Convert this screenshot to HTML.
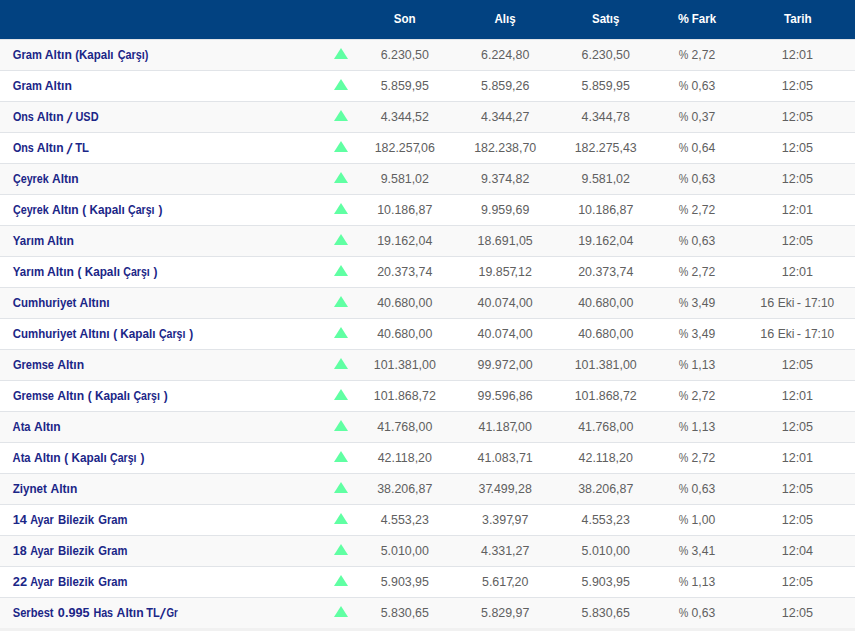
<!DOCTYPE html>
<html lang="tr">
<head>
<meta charset="utf-8">
<title>Altın Fiyatları</title>
<style>
html,body{margin:0;padding:0;}
body{width:855px;height:631px;overflow:hidden;background:#f1f1f1;font-family:"Liberation Sans",sans-serif;font-size:13px;color:#606060;}
.tbl{width:855px;}
.hd{height:39px;background:#024281;color:#fff;position:relative;line-height:37px;}
.r{height:30px;border-top:1px solid #e1e4e8;position:relative;background:#fff;line-height:30px;}
.r.o{background:#f9f9f9;}
span{position:absolute;left:0;top:0;white-space:nowrap;display:block;transform-origin:0 50%;}
.r a{font-weight:bold;color:#1b2687;}
.hd b{font-weight:bold;}
em{font-style:normal;}
.r i{position:absolute;left:334px;top:8px;width:0;height:0;border-left:7px solid transparent;border-right:7px solid transparent;border-bottom:11px solid #60ffa3;}
u{text-decoration:none;letter-spacing:-2px;}
</style>
</head>
<body>
<div class="tbl">
<div class="hd"><b><span style="transform:translateX(393.76px) scaleX(0.894)">Son</span></b> <b><span style="transform:translateX(494.47px) scaleX(0.887)">Alış</span></b> <b><span style="transform:translateX(591.97px) scaleX(0.883)">Satış</span></b> <b><span style="transform:translateX(678.05px) scaleX(0.938)">%</span> <span style="transform:translateX(691.83px) scaleX(0.883)">Fark</span></b> <b><span style="transform:translateX(783.99px) scaleX(0.897)">Tarih</span></b></div>
<div class="r o"><a><span style="transform:translateX(12.87px) scaleX(0.855)">Gram</span> <span style="transform:translateX(44.85px) scaleX(0.933)">Altın</span> <span style="transform:translateX(75.15px) scaleX(0.886)">(Kapalı</span> <span style="transform:translateX(117.68px) scaleX(0.834)">Çarşı)</span></a> <i></i> <em><span style="transform:translateX(380.64px) scaleX(0.954)">6.230,50</span></em> <em><span style="transform:translateX(481.04px) scaleX(0.954)">6.224,80</span></em> <em><span style="transform:translateX(581.59px) scaleX(0.954)">6.230,50</span></em> <em><span style="transform:translateX(678.69px) scaleX(0.828)">%</span> <span style="transform:translateX(691.57px) scaleX(0.935)">2,72</span></em> <em><span style="transform:translateX(781.63px) scaleX(0.968)">12:01</span></em></div>
<div class="r"><a><span style="transform:translateX(12.87px) scaleX(0.855)">Gram</span> <span style="transform:translateX(44.85px) scaleX(0.933)">Altın</span></a> <i></i> <em><span style="transform:translateX(380.64px) scaleX(0.954)">5.859,95</span></em> <em><span style="transform:translateX(481.04px) scaleX(0.954)">5.859,26</span></em> <em><span style="transform:translateX(581.59px) scaleX(0.954)">5.859,95</span></em> <em><span style="transform:translateX(678.69px) scaleX(0.828)">%</span> <span style="transform:translateX(691.57px) scaleX(0.935)">0,63</span></em> <em><span style="transform:translateX(781.63px) scaleX(0.968)">12:05</span></em></div>
<div class="r o"><a><span style="transform:translateX(12.89px) scaleX(0.827)">Ons</span> <span style="transform:translateX(36.75px) scaleX(0.926)">Altın</span> <span style="transform:translate(67.40px,1.1px) scale(1.05,1.167) skewX(-15.5deg)">/</span> <span style="transform:translateX(75.47px) scaleX(0.842)">USD</span></a> <i></i> <em><span style="transform:translateX(380.64px) scaleX(0.954)">4.344,52</span></em> <em><span style="transform:translateX(481.04px) scaleX(0.954)">4.344,27</span></em> <em><span style="transform:translateX(581.59px) scaleX(0.954)">4.344,78</span></em> <em><span style="transform:translateX(678.69px) scaleX(0.828)">%</span> <span style="transform:translateX(691.57px) scaleX(0.935)">0,37</span></em> <em><span style="transform:translateX(781.63px) scaleX(0.968)">12:05</span></em></div>
<div class="r"><a><span style="transform:translateX(12.89px) scaleX(0.827)">Ons</span> <span style="transform:translateX(36.75px) scaleX(0.926)">Altın</span> <span style="transform:translate(67.40px,1.1px) scale(1.05,1.167) skewX(-15.5deg)">/</span> <span style="transform:translateX(75.19px) scaleX(0.872)">TL</span></a> <i></i> <em><span style="transform:translateX(374.69px) scaleX(0.954)">182.25<u>7</u>,06</span></em> <em><span style="transform:translateX(474.14px) scaleX(0.954)">182.238,70</span></em> <em><span style="transform:translateX(574.69px) scaleX(0.954)">182.275,43</span></em> <em><span style="transform:translateX(678.69px) scaleX(0.828)">%</span> <span style="transform:translateX(691.57px) scaleX(0.935)">0,64</span></em> <em><span style="transform:translateX(781.63px) scaleX(0.968)">12:05</span></em></div>
<div class="r o"><a><span style="transform:translateX(12.89px) scaleX(0.827)">Çeyrek</span> <span style="transform:translateX(52.00px) scaleX(0.924)">Altın</span></a> <i></i> <em><span style="transform:translateX(380.64px) scaleX(0.954)">9.581,02</span></em> <em><span style="transform:translateX(481.04px) scaleX(0.954)">9.374,82</span></em> <em><span style="transform:translateX(581.59px) scaleX(0.954)">9.581,02</span></em> <em><span style="transform:translateX(678.69px) scaleX(0.828)">%</span> <span style="transform:translateX(691.57px) scaleX(0.935)">0,63</span></em> <em><span style="transform:translateX(781.63px) scaleX(0.968)">12:05</span></em></div>
<div class="r"><a><span style="transform:translateX(12.89px) scaleX(0.827)">Çeyrek</span> <span style="transform:translateX(52.00px) scaleX(0.924)">Altın</span> <span style="transform:translateX(82.33px) scaleX(0.910)">(</span> <span style="transform:translateX(89.51px) scaleX(0.902)">Kapalı</span> <span style="transform:translateX(128.09px) scaleX(0.813)">Çarşı</span> <span style="transform:translateX(158.39px) scaleX(0.914)">)</span></a> <i></i> <em><span style="transform:translateX(377.19px) scaleX(0.954)">10.186,87</span></em> <em><span style="transform:translateX(481.04px) scaleX(0.954)">9.959,69</span></em> <em><span style="transform:translateX(578.14px) scaleX(0.954)">10.186,87</span></em> <em><span style="transform:translateX(678.69px) scaleX(0.828)">%</span> <span style="transform:translateX(691.57px) scaleX(0.935)">2,72</span></em> <em><span style="transform:translateX(781.63px) scaleX(0.968)">12:01</span></em></div>
<div class="r o"><a><span style="transform:translateX(12.83px) scaleX(0.883)">Yarım</span> <span style="transform:translateX(47.00px) scaleX(0.932)">Altın</span></a> <i></i> <em><span style="transform:translateX(377.19px) scaleX(0.954)">19.162,04</span></em> <em><span style="transform:translateX(477.59px) scaleX(0.954)">18.691,05</span></em> <em><span style="transform:translateX(578.14px) scaleX(0.954)">19.162,04</span></em> <em><span style="transform:translateX(678.69px) scaleX(0.828)">%</span> <span style="transform:translateX(691.57px) scaleX(0.935)">0,63</span></em> <em><span style="transform:translateX(781.63px) scaleX(0.968)">12:05</span></em></div>
<div class="r"><a><span style="transform:translateX(12.83px) scaleX(0.883)">Yarım</span> <span style="transform:translateX(47.00px) scaleX(0.932)">Altın</span> <span style="transform:translateX(77.53px) scaleX(0.910)">(</span> <span style="transform:translateX(84.71px) scaleX(0.902)">Kapalı</span> <span style="transform:translateX(123.29px) scaleX(0.813)">Çarşı</span> <span style="transform:translateX(153.59px) scaleX(0.914)">)</span></a> <i></i> <em><span style="transform:translateX(377.19px) scaleX(0.954)">20.373,74</span></em> <em><span style="transform:translateX(478.55px) scaleX(0.954)">19.85<u>7</u>,12</span></em> <em><span style="transform:translateX(578.14px) scaleX(0.954)">20.373,74</span></em> <em><span style="transform:translateX(678.69px) scaleX(0.828)">%</span> <span style="transform:translateX(691.57px) scaleX(0.935)">2,72</span></em> <em><span style="transform:translateX(781.63px) scaleX(0.968)">12:01</span></em></div>
<div class="r o"><a><span style="transform:translateX(12.86px) scaleX(0.880)">Cumhuriyet</span> <span style="transform:translateX(79.55px) scaleX(0.925)">Altını</span></a> <i></i> <em><span style="transform:translateX(377.19px) scaleX(0.954)">40.680,00</span></em> <em><span style="transform:translateX(477.59px) scaleX(0.954)">40.074,00</span></em> <em><span style="transform:translateX(578.14px) scaleX(0.954)">40.680,00</span></em> <em><span style="transform:translateX(678.69px) scaleX(0.828)">%</span> <span style="transform:translateX(691.57px) scaleX(0.935)">3,49</span></em> <em><span style="transform:translateX(760.13px) scaleX(0.971)">16</span> <span style="transform:translateX(777.65px) scaleX(0.931)">Eki</span> <span style="transform:translateX(796.78px) scaleX(0.992)">-</span> <span style="transform:translateX(804.39px) scaleX(0.913)">17:10</span></em></div>
<div class="r"><a><span style="transform:translateX(12.86px) scaleX(0.880)">Cumhuriyet</span> <span style="transform:translateX(79.55px) scaleX(0.925)">Altını</span> <span style="transform:translateX(113.13px) scaleX(0.910)">(</span> <span style="transform:translateX(120.31px) scaleX(0.902)">Kapalı</span> <span style="transform:translateX(158.89px) scaleX(0.813)">Çarşı</span> <span style="transform:translateX(189.19px) scaleX(0.914)">)</span></a> <i></i> <em><span style="transform:translateX(377.19px) scaleX(0.954)">40.680,00</span></em> <em><span style="transform:translateX(477.59px) scaleX(0.954)">40.074,00</span></em> <em><span style="transform:translateX(578.14px) scaleX(0.954)">40.680,00</span></em> <em><span style="transform:translateX(678.69px) scaleX(0.828)">%</span> <span style="transform:translateX(691.57px) scaleX(0.935)">3,49</span></em> <em><span style="transform:translateX(760.13px) scaleX(0.971)">16</span> <span style="transform:translateX(777.65px) scaleX(0.931)">Eki</span> <span style="transform:translateX(796.78px) scaleX(0.992)">-</span> <span style="transform:translateX(804.39px) scaleX(0.913)">17:10</span></em></div>
<div class="r o"><a><span style="transform:translateX(12.88px) scaleX(0.848)">Gremse</span> <span style="transform:translateX(57.15px) scaleX(0.933)">Altın</span></a> <i></i> <em><span style="transform:translateX(373.74px) scaleX(0.954)">101.381,00</span></em> <em><span style="transform:translateX(477.59px) scaleX(0.954)">99.972,00</span></em> <em><span style="transform:translateX(574.69px) scaleX(0.954)">101.381,00</span></em> <em><span style="transform:translateX(678.69px) scaleX(0.828)">%</span> <span style="transform:translateX(691.57px) scaleX(0.935)">1,13</span></em> <em><span style="transform:translateX(781.63px) scaleX(0.968)">12:05</span></em></div>
<div class="r"><a><span style="transform:translateX(12.88px) scaleX(0.848)">Gremse</span> <span style="transform:translateX(57.15px) scaleX(0.933)">Altın</span> <span style="transform:translateX(87.73px) scaleX(0.910)">(</span> <span style="transform:translateX(94.91px) scaleX(0.902)">Kapalı</span> <span style="transform:translateX(133.49px) scaleX(0.813)">Çarşı</span> <span style="transform:translateX(163.79px) scaleX(0.914)">)</span></a> <i></i> <em><span style="transform:translateX(373.74px) scaleX(0.954)">101.868,72</span></em> <em><span style="transform:translateX(477.59px) scaleX(0.954)">99.596,86</span></em> <em><span style="transform:translateX(574.69px) scaleX(0.954)">101.868,72</span></em> <em><span style="transform:translateX(678.69px) scaleX(0.828)">%</span> <span style="transform:translateX(691.57px) scaleX(0.935)">2,72</span></em> <em><span style="transform:translateX(781.63px) scaleX(0.968)">12:01</span></em></div>
<div class="r o"><a><span style="transform:translateX(12.58px) scaleX(0.858)">Ata</span> <span style="transform:translateX(33.95px) scaleX(0.926)">Altın</span></a> <i></i> <em><span style="transform:translateX(377.19px) scaleX(0.954)">41.768,00</span></em> <em><span style="transform:translateX(478.55px) scaleX(0.954)">41.18<u>7</u>,00</span></em> <em><span style="transform:translateX(578.14px) scaleX(0.954)">41.768,00</span></em> <em><span style="transform:translateX(678.69px) scaleX(0.828)">%</span> <span style="transform:translateX(691.57px) scaleX(0.935)">1,13</span></em> <em><span style="transform:translateX(781.63px) scaleX(0.968)">12:05</span></em></div>
<div class="r"><a><span style="transform:translateX(12.58px) scaleX(0.858)">Ata</span> <span style="transform:translateX(33.95px) scaleX(0.926)">Altın</span> <span style="transform:translateX(64.33px) scaleX(0.910)">(</span> <span style="transform:translateX(71.51px) scaleX(0.902)">Kapalı</span> <span style="transform:translateX(110.09px) scaleX(0.813)">Çarşı</span> <span style="transform:translateX(140.39px) scaleX(0.914)">)</span></a> <i></i> <em><span style="transform:translateX(377.65px) scaleX(0.954)">42.118,20</span></em> <em><span style="transform:translateX(477.59px) scaleX(0.954)">41.083,71</span></em> <em><span style="transform:translateX(578.60px) scaleX(0.954)">42.118,20</span></em> <em><span style="transform:translateX(678.69px) scaleX(0.828)">%</span> <span style="transform:translateX(691.57px) scaleX(0.935)">2,72</span></em> <em><span style="transform:translateX(781.63px) scaleX(0.968)">12:01</span></em></div>
<div class="r o"><a><span style="transform:translateX(12.72px) scaleX(0.893)">Ziynet</span> <span style="transform:translateX(50.50px) scaleX(0.926)">Altın</span></a> <i></i> <em><span style="transform:translateX(377.19px) scaleX(0.954)">38.206,87</span></em> <em><span style="transform:translateX(478.55px) scaleX(0.954)">3<u>7</u>.499,28</span></em> <em><span style="transform:translateX(578.14px) scaleX(0.954)">38.206,87</span></em> <em><span style="transform:translateX(678.69px) scaleX(0.828)">%</span> <span style="transform:translateX(691.57px) scaleX(0.935)">0,63</span></em> <em><span style="transform:translateX(781.63px) scaleX(0.968)">12:05</span></em></div>
<div class="r"><a><span style="transform:translateX(12.70px) scaleX(0.974)">14</span> <span style="transform:translateX(30.14px) scaleX(0.830)">Ayar</span> <span style="transform:translateX(57.93px) scaleX(0.878)">Bilezik</span> <span style="transform:translateX(98.22px) scaleX(0.860)">Gram</span></a> <i></i> <em><span style="transform:translateX(380.64px) scaleX(0.954)">4.553,23</span></em> <em><span style="transform:translateX(482.00px) scaleX(0.954)">3.39<u>7</u>,97</span></em> <em><span style="transform:translateX(581.59px) scaleX(0.954)">4.553,23</span></em> <em><span style="transform:translateX(678.69px) scaleX(0.828)">%</span> <span style="transform:translateX(691.57px) scaleX(0.935)">1,00</span></em> <em><span style="transform:translateX(781.63px) scaleX(0.968)">12:05</span></em></div>
<div class="r o"><a><span style="transform:translateX(12.71px) scaleX(0.964)">18</span> <span style="transform:translateX(30.14px) scaleX(0.830)">Ayar</span> <span style="transform:translateX(57.93px) scaleX(0.878)">Bilezik</span> <span style="transform:translateX(98.22px) scaleX(0.860)">Gram</span></a> <i></i> <em><span style="transform:translateX(380.64px) scaleX(0.954)">5.010,00</span></em> <em><span style="transform:translateX(481.04px) scaleX(0.954)">4.331,27</span></em> <em><span style="transform:translateX(581.59px) scaleX(0.954)">5.010,00</span></em> <em><span style="transform:translateX(678.69px) scaleX(0.828)">%</span> <span style="transform:translateX(691.57px) scaleX(0.935)">3,41</span></em> <em><span style="transform:translateX(781.63px) scaleX(0.968)">12:04</span></em></div>
<div class="r"><a><span style="transform:translateX(12.81px) scaleX(0.987)">22</span> <span style="transform:translateX(30.14px) scaleX(0.830)">Ayar</span> <span style="transform:translateX(57.93px) scaleX(0.878)">Bilezik</span> <span style="transform:translateX(98.22px) scaleX(0.860)">Gram</span></a> <i></i> <em><span style="transform:translateX(380.64px) scaleX(0.954)">5.903,95</span></em> <em><span style="transform:translateX(482.00px) scaleX(0.954)">5.61<u>7</u>,20</span></em> <em><span style="transform:translateX(581.59px) scaleX(0.954)">5.903,95</span></em> <em><span style="transform:translateX(678.69px) scaleX(0.828)">%</span> <span style="transform:translateX(691.57px) scaleX(0.935)">1,13</span></em> <em><span style="transform:translateX(781.63px) scaleX(0.968)">12:05</span></em></div>
<div class="r o"><a><span style="transform:translateX(12.73px) scaleX(0.856)">Serbest</span> <span style="transform:translateX(57.86px) scaleX(0.971)">0.995</span> <span style="transform:translateX(93.43px) scaleX(0.824)">Has</span> <span style="transform:translateX(116.60px) scaleX(0.935)">Altın</span> <span style="transform:translateX(146.24px) scaleX(0.849)">TL</span><span style="transform:translate(160.60px,1.1px) scale(1.05,1.167) skewX(-15.5deg)">/</span><span style="transform:translateX(166.53px) scaleX(0.745)">Gr</span></a> <i></i> <em><span style="transform:translateX(380.64px) scaleX(0.954)">5.830,65</span></em> <em><span style="transform:translateX(481.04px) scaleX(0.954)">5.829,97</span></em> <em><span style="transform:translateX(581.59px) scaleX(0.954)">5.830,65</span></em> <em><span style="transform:translateX(678.69px) scaleX(0.828)">%</span> <span style="transform:translateX(691.57px) scaleX(0.935)">0,63</span></em> <em><span style="transform:translateX(781.63px) scaleX(0.968)">12:05</span></em></div>
</div>
</body>
</html>
